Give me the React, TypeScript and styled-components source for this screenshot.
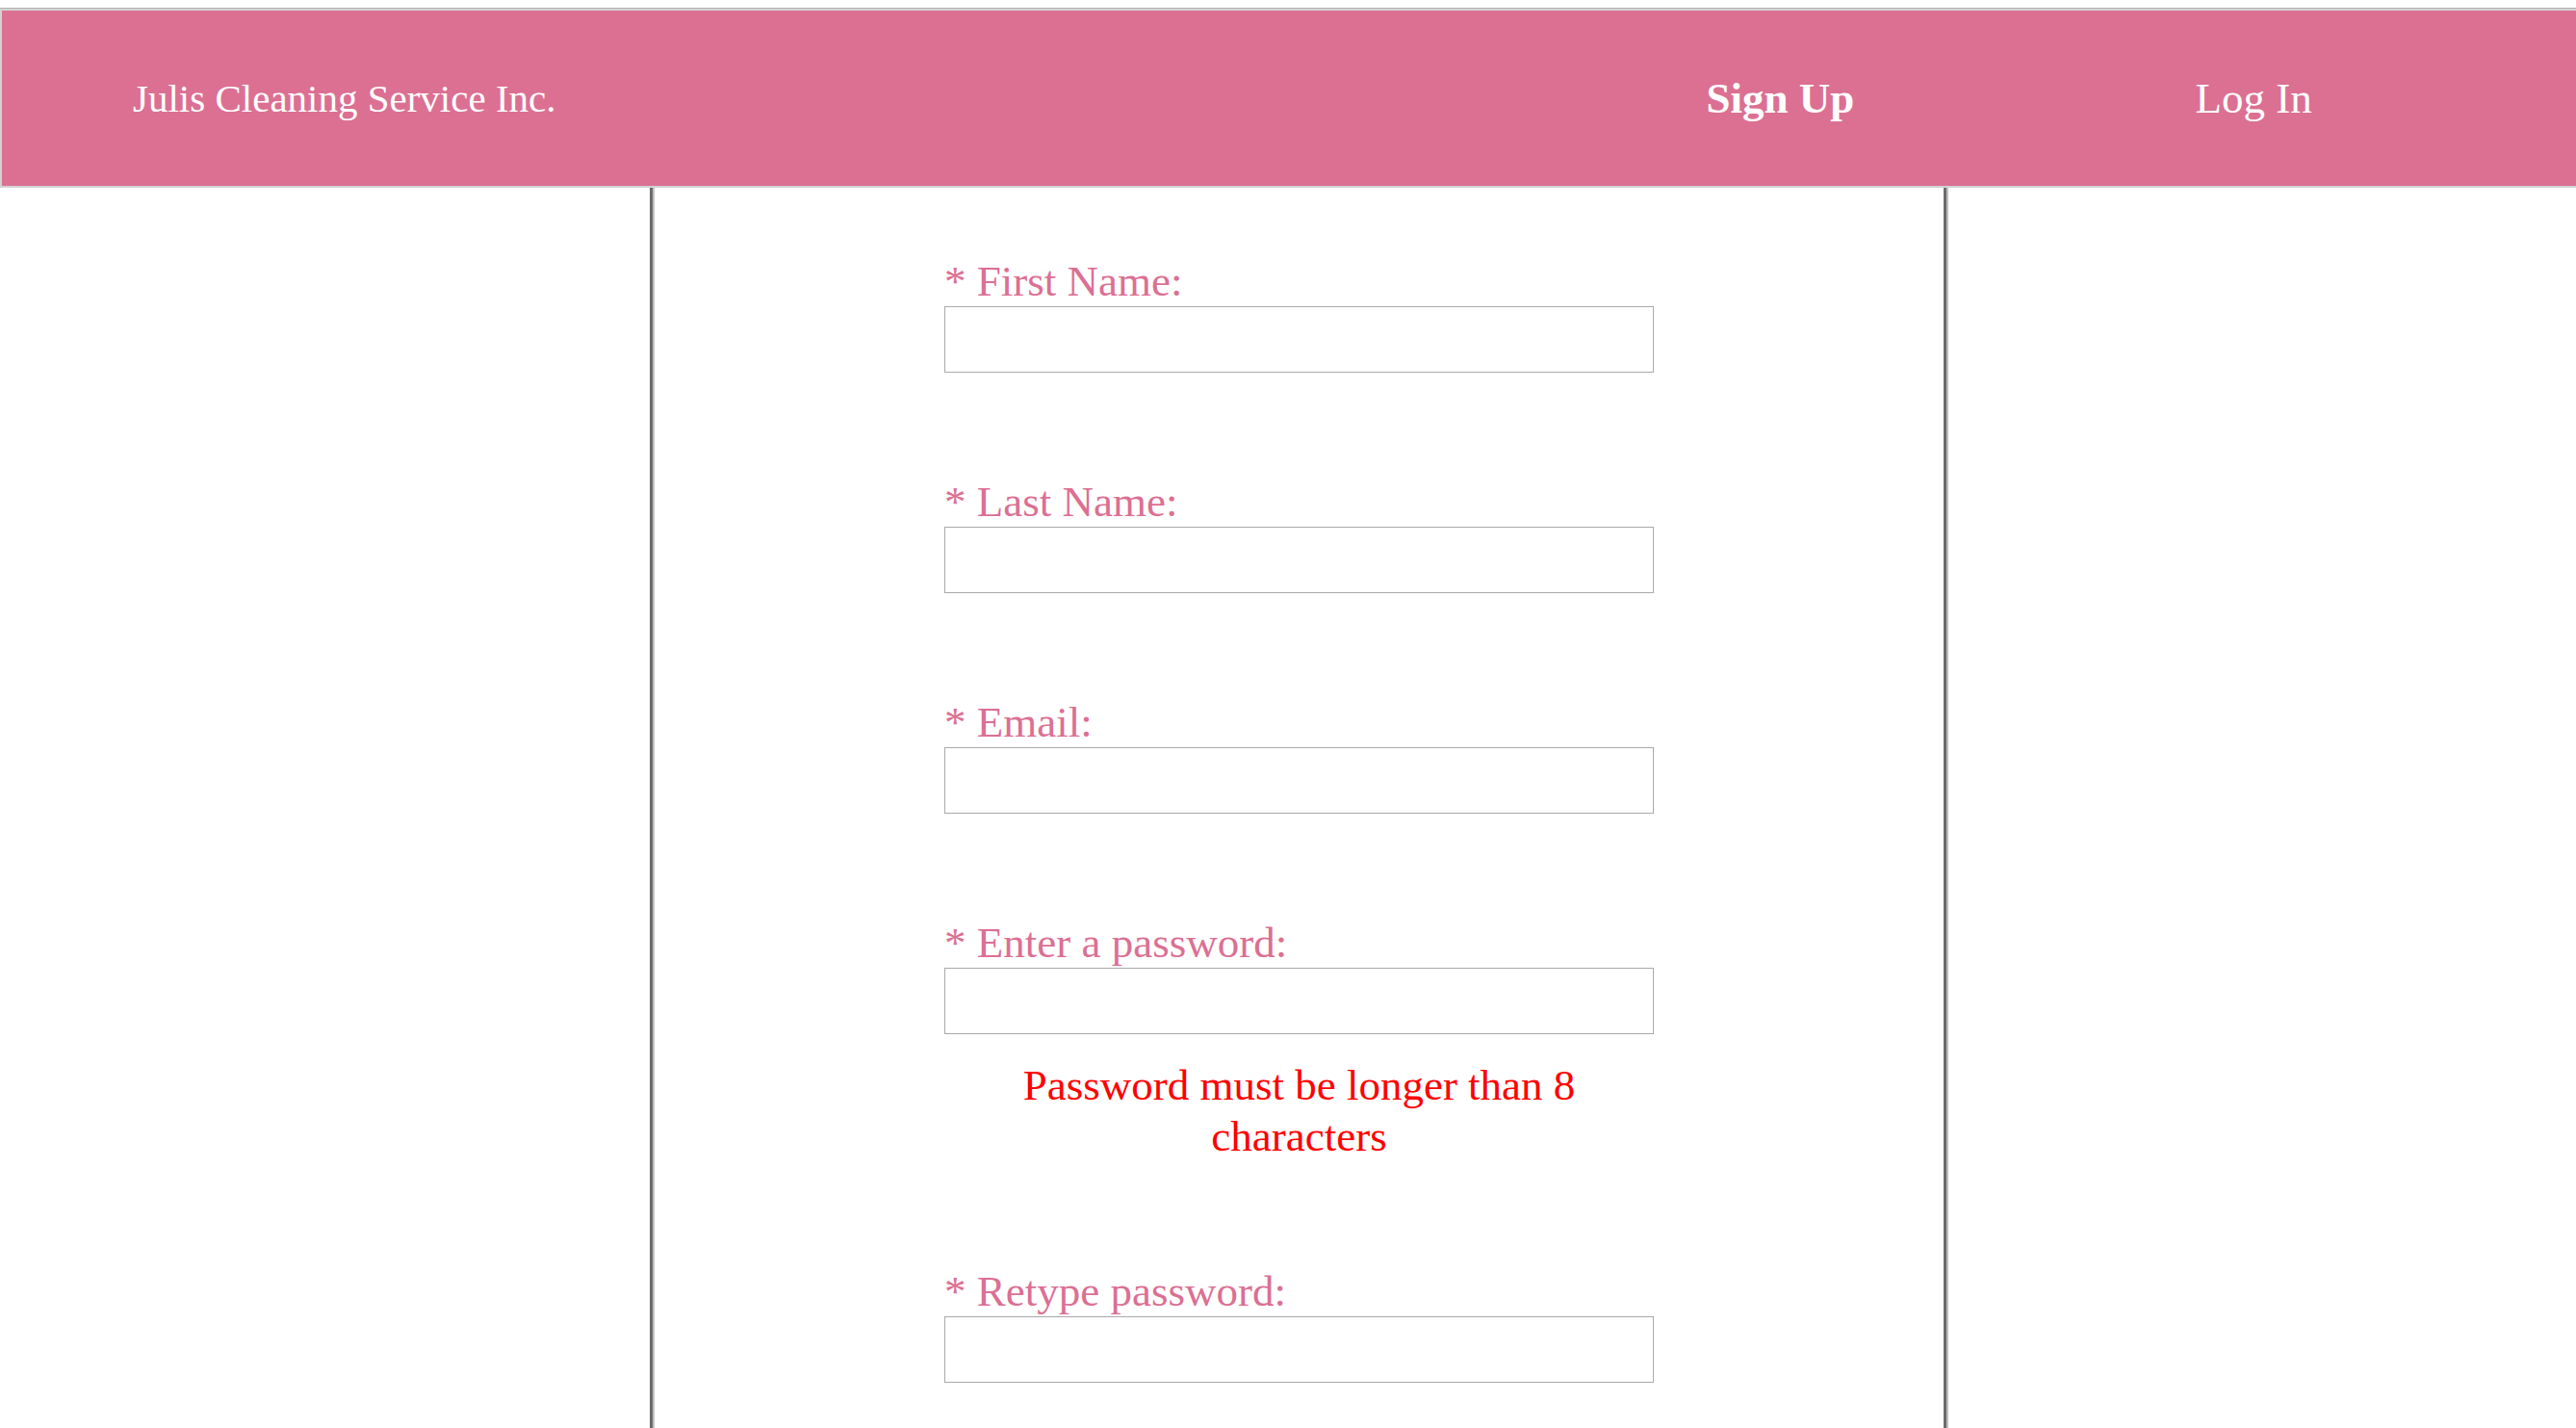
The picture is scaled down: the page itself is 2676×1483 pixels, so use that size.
import React from "react";
import styled, { createGlobalStyle } from "styled-components";

const GlobalStyle = createGlobalStyle`
  * {
    box-sizing: border-box;
  }

  body {
    margin: 0;
    background: #ffffff;
    font-family: "Liberation Serif", "Times New Roman", serif;
  }
`;

const Page = styled.div`
  display: flex;
  flex-direction: column;
  min-height: 100vh;
  padding-top: 8px;
`;

const TopRule = styled.hr`
  width: 100%;
  height: 1px;
  margin: 0;
  border: none;
  background: #b4b4b4;
`;

const Header = styled.header`
  display: grid;
  grid-template-columns: 149fr 100fr;
  align-items: center;
  min-height: 186px;
  padding: 0 89px 0 136px;
  border: 2px solid #d3d3d3;
  border-right: none;
  background: palevioletred;
`;

const Brand = styled.a`
  color: #ffffff;
  font-size: 41px;
  line-height: 48px;
  text-decoration: none;
`;

const Nav = styled.nav`
  display: grid;
  grid-template-columns: 1fr 1fr;
  text-align: center;
`;

const NavLink = styled.a<{ $active?: boolean }>`
  color: #ffffff;
  font-size: 45px;
  font-weight: ${({ $active }) => ($active ? 700 : 400)};
  line-height: 53px;
  text-decoration: none;
`;

const Main = styled.main`
  display: grid;
  flex: 1;
  grid-template-columns: 675fr 1349fr 652fr;
`;

const Panel = styled.section`
  grid-column: 2;
  padding: 71px 1px 0 0;
  border-left: 3px solid #6c6c6c;
  border-right: 2px solid #c0c0c0;
  box-shadow: inset 2px 0 0 #c0c0c0, inset -3px 0 0 #6c6c6c;
`;

const Form = styled.form`
  width: 55%;
  max-width: 737px;
  margin: 0 auto;
`;

const Field = styled.div`
  display: flex;
  flex-direction: column;
  padding-bottom: 108px;
`;

const Label = styled.label`
  color: palevioletred;
  font-size: 45px;
  line-height: 52px;
`;

const Input = styled.input`
  width: 100%;
  height: 69px;
  padding: 4px 8px;
  border: 1px solid #a9a9a9;
  border-radius: 0;
  background: #ffffff;
  font: inherit;
  font-size: 45px;
`;

const ErrorText = styled.p`
  margin: 27px 0 0;
  color: red;
  font-size: 45px;
  line-height: 53px;
  text-align: center;
`;

type FieldInfo = { id: string; label: string; type: string; error?: string };

const fields: FieldInfo[] = [
  { id: "first-name", label: "First Name:", type: "text" },
  { id: "last-name", label: "Last Name:", type: "text" },
  { id: "email", label: "Email:", type: "email" },
  {
    id: "password",
    label: "Enter a password:",
    type: "password",
    error: "Password must be longer than 8 characters",
  },
  { id: "retype", label: "Retype password:", type: "password" },
];

// The last field closes the form, so it needs less room below it.
const FieldList = styled.div`
  ${Field}:last-child {
    padding-bottom: 40px;
  }
`;

function FormField({ id, label, type, error }: FieldInfo) {
  return (
    <Field>
      <Label htmlFor={id}>* {label}</Label>
      <Input id={id} name={id} type={type} required aria-describedby={error ? `${id}-error` : undefined} />
      {error && <ErrorText id={`${id}-error`}>{error}</ErrorText>}
    </Field>
  );
}

export default function App() {
  return (
    <>
      <GlobalStyle />
      <Page>
        <TopRule />
        <Header>
          <Brand href="#home">Julis Cleaning Service Inc.</Brand>
          <Nav>
            <NavLink href="#signup" $active>
              Sign Up
            </NavLink>
            <NavLink href="#login">Log In</NavLink>
          </Nav>
        </Header>
        <Main>
          <Panel>
            <Form>
              <FieldList>
                {fields.map((field) => (
                  <FormField key={field.id} {...field} />
                ))}
              </FieldList>
            </Form>
          </Panel>
        </Main>
      </Page>
    </>
  );
}
